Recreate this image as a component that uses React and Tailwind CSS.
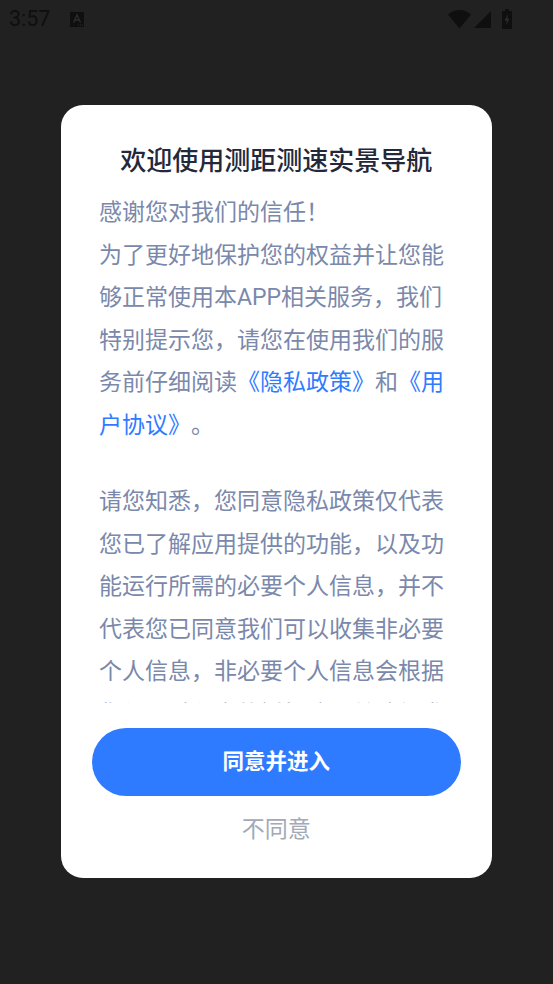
export default function App() {
  return (
    <div className="relative flex h-[984px] w-[553px] flex-col overflow-hidden bg-[#212121] font-['Roboto','Noto_Sans_CJK_SC',sans-serif]">
      <div className="flex h-[38px] items-center pl-[9px] pr-[41px]">
        <span className="text-[21.5px] leading-[38px] text-[#0f0f0f]">3:57</span>
        <svg className="ml-[20px]" width="14" height="15" viewBox="0 0 14 15">
          <rect width="14" height="15" fill="#0f0f0f" />
          <path d="M3.5 10.5 L7 3 L10.5 10.5 M5 8 H9" stroke="#2c2c2c" strokeWidth="1.4" fill="none" />
          <path d="M8 13 h1 M10 13 h1 M12 13 h1" stroke="#2c2c2c" strokeWidth="1" />
        </svg>
        <div className="ml-auto flex items-center">
          <svg width="23" height="19" viewBox="0 0 23 19">
            <path d="M0 4.5 C3 1.8 7 0 11.5 0 C16 0 20 1.8 23 4.5 L11.5 18.5 Z" fill="#0f0f0f" />
          </svg>
          <svg className="ml-[3px] mt-[1px]" width="17" height="17" viewBox="0 0 17 17">
            <path d="M17 0 V17 H0 Z" fill="#0f0f0f" />
          </svg>
          <svg className="mb-[1px] ml-[11px]" width="10" height="20" viewBox="0 0 10 20">
            <path d="M3 0 H7 V2 H10 V20 H0 V2 H3 Z" fill="#0f0f0f" />
            <path d="M6 5 L2.5 11.5 H4.8 L4 16.5 L7.5 9.8 H5.3 Z" fill="#2c2c2c" />
          </svg>
        </div>
      </div>

      <div className="ml-[61px] mt-[67px] flex h-[773px] w-[430.5px] flex-col items-center rounded-[22px] bg-white [text-spacing-trim:space-all]">
        <h1 className="mt-[36px] text-[26px] font-medium leading-[40px] text-[#23283a]">欢迎使用测距测速实景导航</h1>
        <div className="mt-[11px] ml-[38px] h-[511px] w-[346px] self-start overflow-hidden text-[23px] leading-[42.5px] text-[#7a88ab]">
          <p>感谢您对我们的信任！</p>
          <p>
            为了更好地保护您的权益并让您能够正常使用本APP相关服务，我们特别提示您，请您在使用我们的服务前仔细阅读
            <span className="text-[#2f7bff]">《隐私政策》</span>和<span className="text-[#2f7bff]">《用户协议》</span>。
          </p>
          <p className="mt-[34px]">
            请您知悉，您同意隐私政策仅代表您已了解应用提供的功能，以及功能运行所需的必要个人信息，并不代表您已同意我们可以收集非必要个人信息，非必要个人信息会根据您使用过程中的授权情况单独征求您的同意。
          </p>
        </div>
        <button className="mt-[25px] h-[68px] w-[369px] rounded-full bg-[#2f7bff] text-[21.5px] font-bold text-white">同意并进入</button>
        <button className="mt-[17px] h-[34px] text-[23px] leading-[34px] text-[#a3a9b6]">不同意</button>
      </div>
    </div>
  );
}
